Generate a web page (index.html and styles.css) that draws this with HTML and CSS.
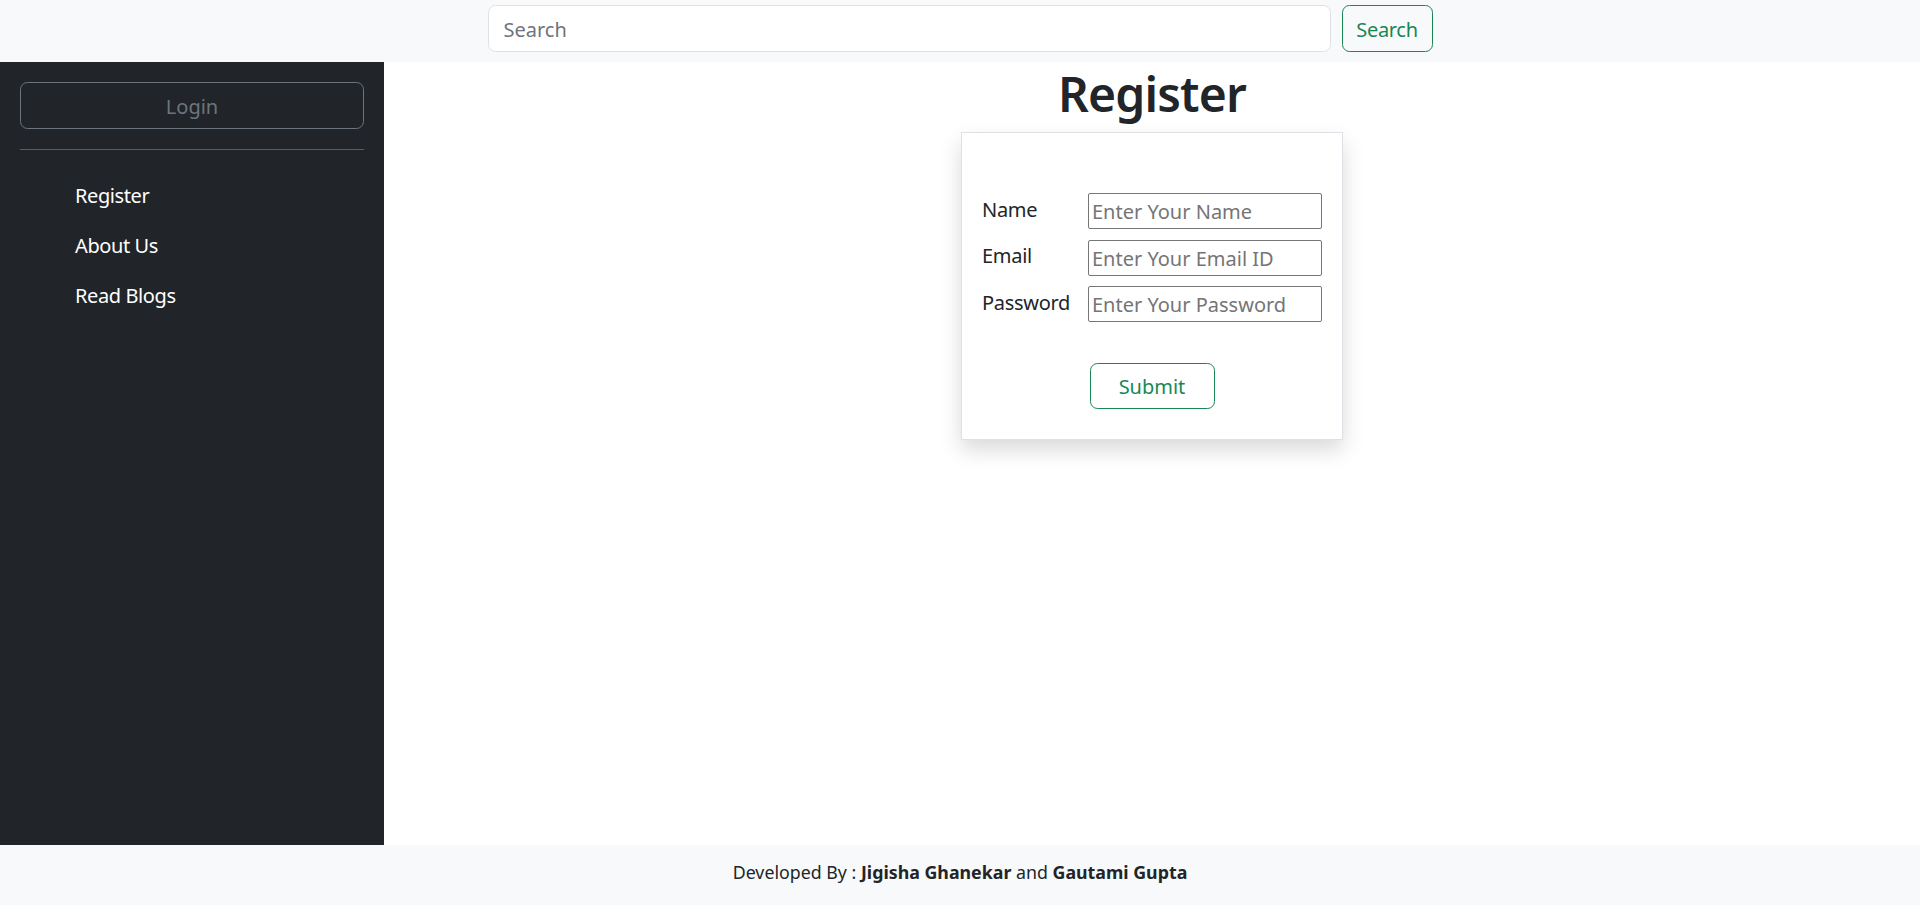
FILE: index.html
```html
<!DOCTYPE html>
<html lang="en">
<head>
<meta charset="utf-8">
<title>Register</title>
<link rel="stylesheet" href="styles.css">
</head>
<body>
<header class="topbar">
  <form class="search-form">
    <input class="search-input" type="search" placeholder="Search">
    <button class="btn btn-green search-btn" type="button">Search</button>
  </form>
</header>
<div class="middle">
  <aside class="sidebar">
    <button class="btn login-btn" type="button">Login</button>
    <hr class="divider">
    <ul class="side-nav">
      <li><a href="#">Register</a></li>
      <li><a href="#">About Us</a></li>
      <li><a href="#">Read Blogs</a></li>
    </ul>
  </aside>
  <main class="content">
    <h1 class="title">Register</h1>
    <div class="card">
      <form class="reg-form">
        <div class="fields">
          <label class="lbl" for="name">Name</label>
          <input class="field" id="name" type="text" placeholder="Enter Your Name">
          <label class="lbl" for="email">Email</label>
          <input class="field" id="email" type="email" placeholder="Enter Your Email ID">
          <label class="lbl" for="pass">Password</label>
          <input class="field" id="pass" type="password" placeholder="Enter Your Password">
        </div>
        <div class="submit-row">
          <button class="btn btn-green submit-btn" type="button">Submit</button>
        </div>
      </form>
    </div>
  </main>
</div>
<footer class="footer">
  <p class="credits">Developed By : <b>Jigisha Ghanekar</b> and <b>Gautami Gupta</b></p>
</footer>
</body>
</html>
```
FILE: styles.css
```css
* { box-sizing: border-box; }
html, body { height: 100%; }
body {
  margin: 0;
  font-family: "Noto Sans", "Open Sans", sans-serif;
  font-size: 20px;
  line-height: 1.5;
  color: #212529;
  background: #fff;
  display: flex;
  flex-direction: column;
  height: 905px;
}
.topbar {
  background: #f8f9fa;
  height: 62px;
  padding-top: 5px;
  flex: none;
}
.search-form {
  display: flex;
  justify-content: center;
  gap: 11px;
  margin: 0;
}
.search-input {
  width: 843px;
  height: 47px;
  border: 1px solid #dee2e6;
  border-radius: 7.5px;
  padding: 2px 15px 0;
  font: inherit;
  font-size: 20px;
  color: #212529;
  background: #fff;
  outline: none;
}
.search-input::placeholder { color: #6c757d; }
.btn {
  font: inherit;
  font-size: 20px;
  background: transparent;
  border-radius: 7.5px;
  cursor: pointer;
  padding: 2px 0 0;
}
.btn-green {
  color: #198754;
  border: 1px solid #198754;
}
.search-btn { width: 91px; height: 47px; letter-spacing: -0.3px; }
.middle {
  flex: 1;
  display: flex;
  min-height: 0;
}
.sidebar {
  width: 384px;
  flex: none;
  background: #212529;
  padding: 20px;
}
.login-btn {
  width: 100%;
  height: 47px;
  color: #6c757d;
  border: 1px solid #6c757d;
  display: block;
}
.divider {
  margin: 20px 0 0;
  border: 0;
  border-top: 1px solid #5a5d61;
}
.side-nav {
  list-style: none;
  margin: 21px 0 0;
  padding: 0 0 0 55px;
}
.side-nav a {
  display: block;
  padding: 10px 0;
  color: #fff;
  text-decoration: none;
  line-height: 30px;
  letter-spacing: -0.4px;
}
.content {
  flex: 1;
  display: flex;
  flex-direction: column;
  align-items: center;
}
.title {
  margin: 2px 0 8px;
  font-size: 48px;
  font-weight: 600;
  line-height: 60px;
  letter-spacing: -0.8px;
}
.card {
  width: 382px;
  border: 1px solid #dee2e6;
  background: #fff;
  box-shadow: 0 10px 20px rgba(0, 0, 0, 0.15);
  padding: 60px 20px 30px;
}
.reg-form { margin: 0; }
.fields {
  display: grid;
  grid-template-columns: 106px 234px;
  row-gap: 10.5px;
  align-items: center;
}
.lbl { line-height: 30px; padding-bottom: 3px; letter-spacing: -0.3px; }
.field {
  height: 36px;
  border: 1px solid #767676;
  border-radius: 2px;
  padding: 1px 3px 0;
  font: inherit;
  font-size: 20px;
  color: #212529;
  outline: none;
}
.field::placeholder { color: #757575; }
.submit-row {
  display: flex;
  justify-content: center;
  margin-top: 41px;
}
.submit-btn { width: 125px; height: 46px; }
.footer {
  height: 60px;
  flex: none;
  background: #f8f9fa;
  display: flex;
  align-items: center;
  justify-content: center;
  padding-bottom: 6px;
}
.credits {
  margin: 0;
  font-size: 17.8px;
  line-height: 26px;
}
.credits b { font-weight: 700; }
```
